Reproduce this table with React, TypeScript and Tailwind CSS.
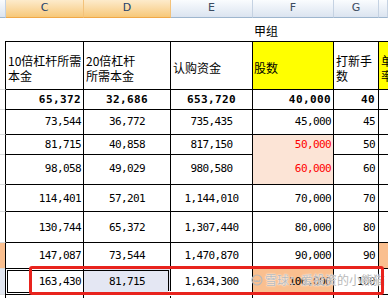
import React from "react";

const grid = "grid grid-cols-[6px_78px_87px_82px_81px_45px_9px]";
const cjk = "font-['Noto_Sans_CJK_SC',sans-serif] text-[12px] leading-[15px]";
const num = "font-['DejaVu_Sans_Mono',monospace] text-[11px] tracking-[-0.6px]";
const numBold = "font-['DejaVu_Sans_Mono',monospace] text-[11px] font-bold tracking-[0.4px]";

type Row = {
  h: string;
  bold?: boolean;
  c: string;
  d: string;
  e: string;
  f: string;
  g: string;
  fBg?: string;
  red?: boolean;
  bBg?: string;
  dBg?: string;
  hBg?: string;
};

const rows: Row[] = [
  { h: "h-[19px]", bold: true, c: "65,372", d: "32,686", e: "653,720", f: "40,000", g: "40" },
  { h: "h-[26px]", c: "73,544", d: "36,772", e: "735,435", f: "45,000", g: "45" },
  { h: "h-[18px]", c: "81,715", d: "40,858", e: "817,150", f: "50,000", g: "50", fBg: "bg-[#fce4d6]", red: true },
  { h: "h-[32px]", c: "98,058", d: "49,029", e: "980,580", f: "60,000", g: "60", fBg: "bg-[#fce4d6]", red: true },
  { h: "h-[27px]", c: "114,401", d: "57,201", e: "1,144,010", f: "70,000", g: "70" },
  { h: "h-[31px]", c: "130,744", d: "65,372", e: "1,307,440", f: "80,000", g: "80" },
  { h: "h-[26px]", c: "147,087", d: "73,544", e: "1,470,870", f: "90,000", g: "90", bBg: "bg-[#fabf8f]", hBg: "bg-[#fabf8f]" },
  {
    h: "h-[26px]",
    c: "163,430",
    d: "81,715",
    e: "1,634,300",
    f: "100,000",
    g: "100",
    bBg: "bg-[#e2e7f1]",
    dBg: "bg-[#e4e7f3]",
    fBg: "bg-[#fabf8f]",
  },
  { h: "h-[10px]", c: "", d: "", e: "", f: "", g: "" },
];

const ColHead = ({ label, selected }: { label?: string; selected?: boolean }) => (
  <div
    className={
      selected
        ? "flex items-center justify-center border-r border-b border-r-[#f3c27a] border-b-[#f0a848] bg-linear-to-b from-[#fdebcb] to-[#f7c878] text-[#23406a]"
        : "flex items-center justify-center border-r border-b border-r-[#c5d2e2] border-b-[#9eb6ce] bg-linear-to-b from-[#fafcfe] to-[#dbe4f0] text-[#3b4b61]"
    }
  >
    <span className="font-['DejaVu_Sans',sans-serif] text-[11px]">{label}</span>
  </div>
);

const Watermark = () => (
  <div className="absolute left-[251px] top-[273px] flex items-center gap-[2px] text-[#b9b9b9] [text-shadow:0_0_1px_#fff,0_0_2px_#fff]">
    <svg width="12" height="12" viewBox="0 0 12 12" fill="none" stroke="#b9b9b9" strokeWidth="1.2">
      <circle cx="6" cy="6" r="5" />
      <path d="M3 5.5c0 2 1.5 2.5 3 1.2c1.5 1.3 3 .8 3-1.2" />
    </svg>
    <span className="font-['Noto_Sans_CJK_SC',sans-serif] text-[12px] leading-[14px] whitespace-nowrap">
      雪球：爱投资的小熊猫
    </span>
  </div>
);

export default function App() {
  return (
    <div className="relative h-[298px] w-[388px] overflow-hidden bg-white text-black">
      {/* column letters */}
      <div className={`${grid} h-[16px]`}>
        <ColHead />
        <ColHead label="C" selected />
        <ColHead label="D" selected />
        <ColHead label="E" />
        <ColHead label="F" />
        <ColHead label="G" />
        <ColHead />
      </div>

      {/* row 1 */}
      <div className={`${grid} h-[25px]`}>
        <div />
        <div />
        <div />
        <div />
        <div className={`${cjk} flex items-center pt-[3px] pl-[1px] whitespace-nowrap`}>甲组</div>
        <div />
        <div />
      </div>

      {/* row 2: headings */}
      <div className={`${grid} h-[49px]`}>
        <div className="border-r border-b border-r-black border-b-[#dadcdd]" />
        <div className={`${cjk} flex items-center border-t border-r border-b border-black pt-[4px] pl-[2px] whitespace-nowrap`}>
          <span>
            10倍杠杆所需
            <br />
            本金
          </span>
        </div>
        <div className={`${cjk} flex items-center border-t border-r border-b border-black pt-[4px] pl-[2px] whitespace-nowrap`}>
          <span>
            20倍杠杆
            <br />
            所需本金
          </span>
        </div>
        <div className={`${cjk} flex items-center border-t border-r border-b border-black pt-[4px] pl-[2px] whitespace-nowrap`}>
          认购资金
        </div>
        <div className={`${cjk} flex items-center border-t border-r border-b border-black bg-[#ffff00] pt-[4px] pl-[1px] whitespace-nowrap`}>
          股数
        </div>
        <div className={`${cjk} flex items-center border-t border-r border-b border-black pt-[4px] pl-[2px] whitespace-nowrap`}>
          <span>
            打新手
            <br />
            数
          </span>
        </div>
        <div className={`${cjk} flex items-center overflow-hidden border-t border-b border-black bg-[#ffff00] pt-[4px] pl-[2px] whitespace-nowrap`}>
          <span>
            单
            <br />
            率
          </span>
        </div>
      </div>

      {/* data rows */}
      {rows.map((r, i) => {
        const t = r.bold ? numBold : num;
        return (
          <div key={i} className={`${grid} ${r.h}`}>
            <div className={`border-r border-b border-r-black border-b-[#dadcdd] ${r.bBg ?? ""}`} />
            <div className={`${t} flex items-center justify-end border-r border-b border-black pt-[2px] pr-[2px]`}>{r.c}</div>
            <div className={`${t} flex items-center justify-center border-r border-b border-black pt-[2px] ${r.dBg ?? ""}`}>{r.d}</div>
            <div className={`${t} flex items-center justify-center border-r border-b border-black pt-[2px]`}>{r.e}</div>
            <div
              className={`${t} flex items-center justify-end border-r border-b border-black pt-[2px] pr-[2px] ${r.fBg ?? ""} ${
                r.red ? "text-[#ff0000]" : ""
              }`}
            >
              {r.f}
            </div>
            <div className={`${t} flex items-center justify-end border-r border-b border-black pt-[2px] pr-[3px]`}>{r.g}</div>
            <div className={`border-b border-black ${r.hBg ?? ""}`} />
          </div>
        );
      })}

      {/* active selection C10:D10 */}
      <div className="absolute left-[5px] top-[268px] h-[27px] w-[166px] border border-black">
        <div className="absolute inset-[1px] border border-black" />
      </div>
      <div className="absolute left-[168px] top-[291px] h-[5px] w-[5px] border border-white bg-black" />

      <Watermark />

      {/* red highlight box */}
      <div className="absolute left-[29px] top-[266px] h-[29px] w-[355px] rounded-[3px] border-[3px] border-[#e8231d]" />
    </div>
  );
}
